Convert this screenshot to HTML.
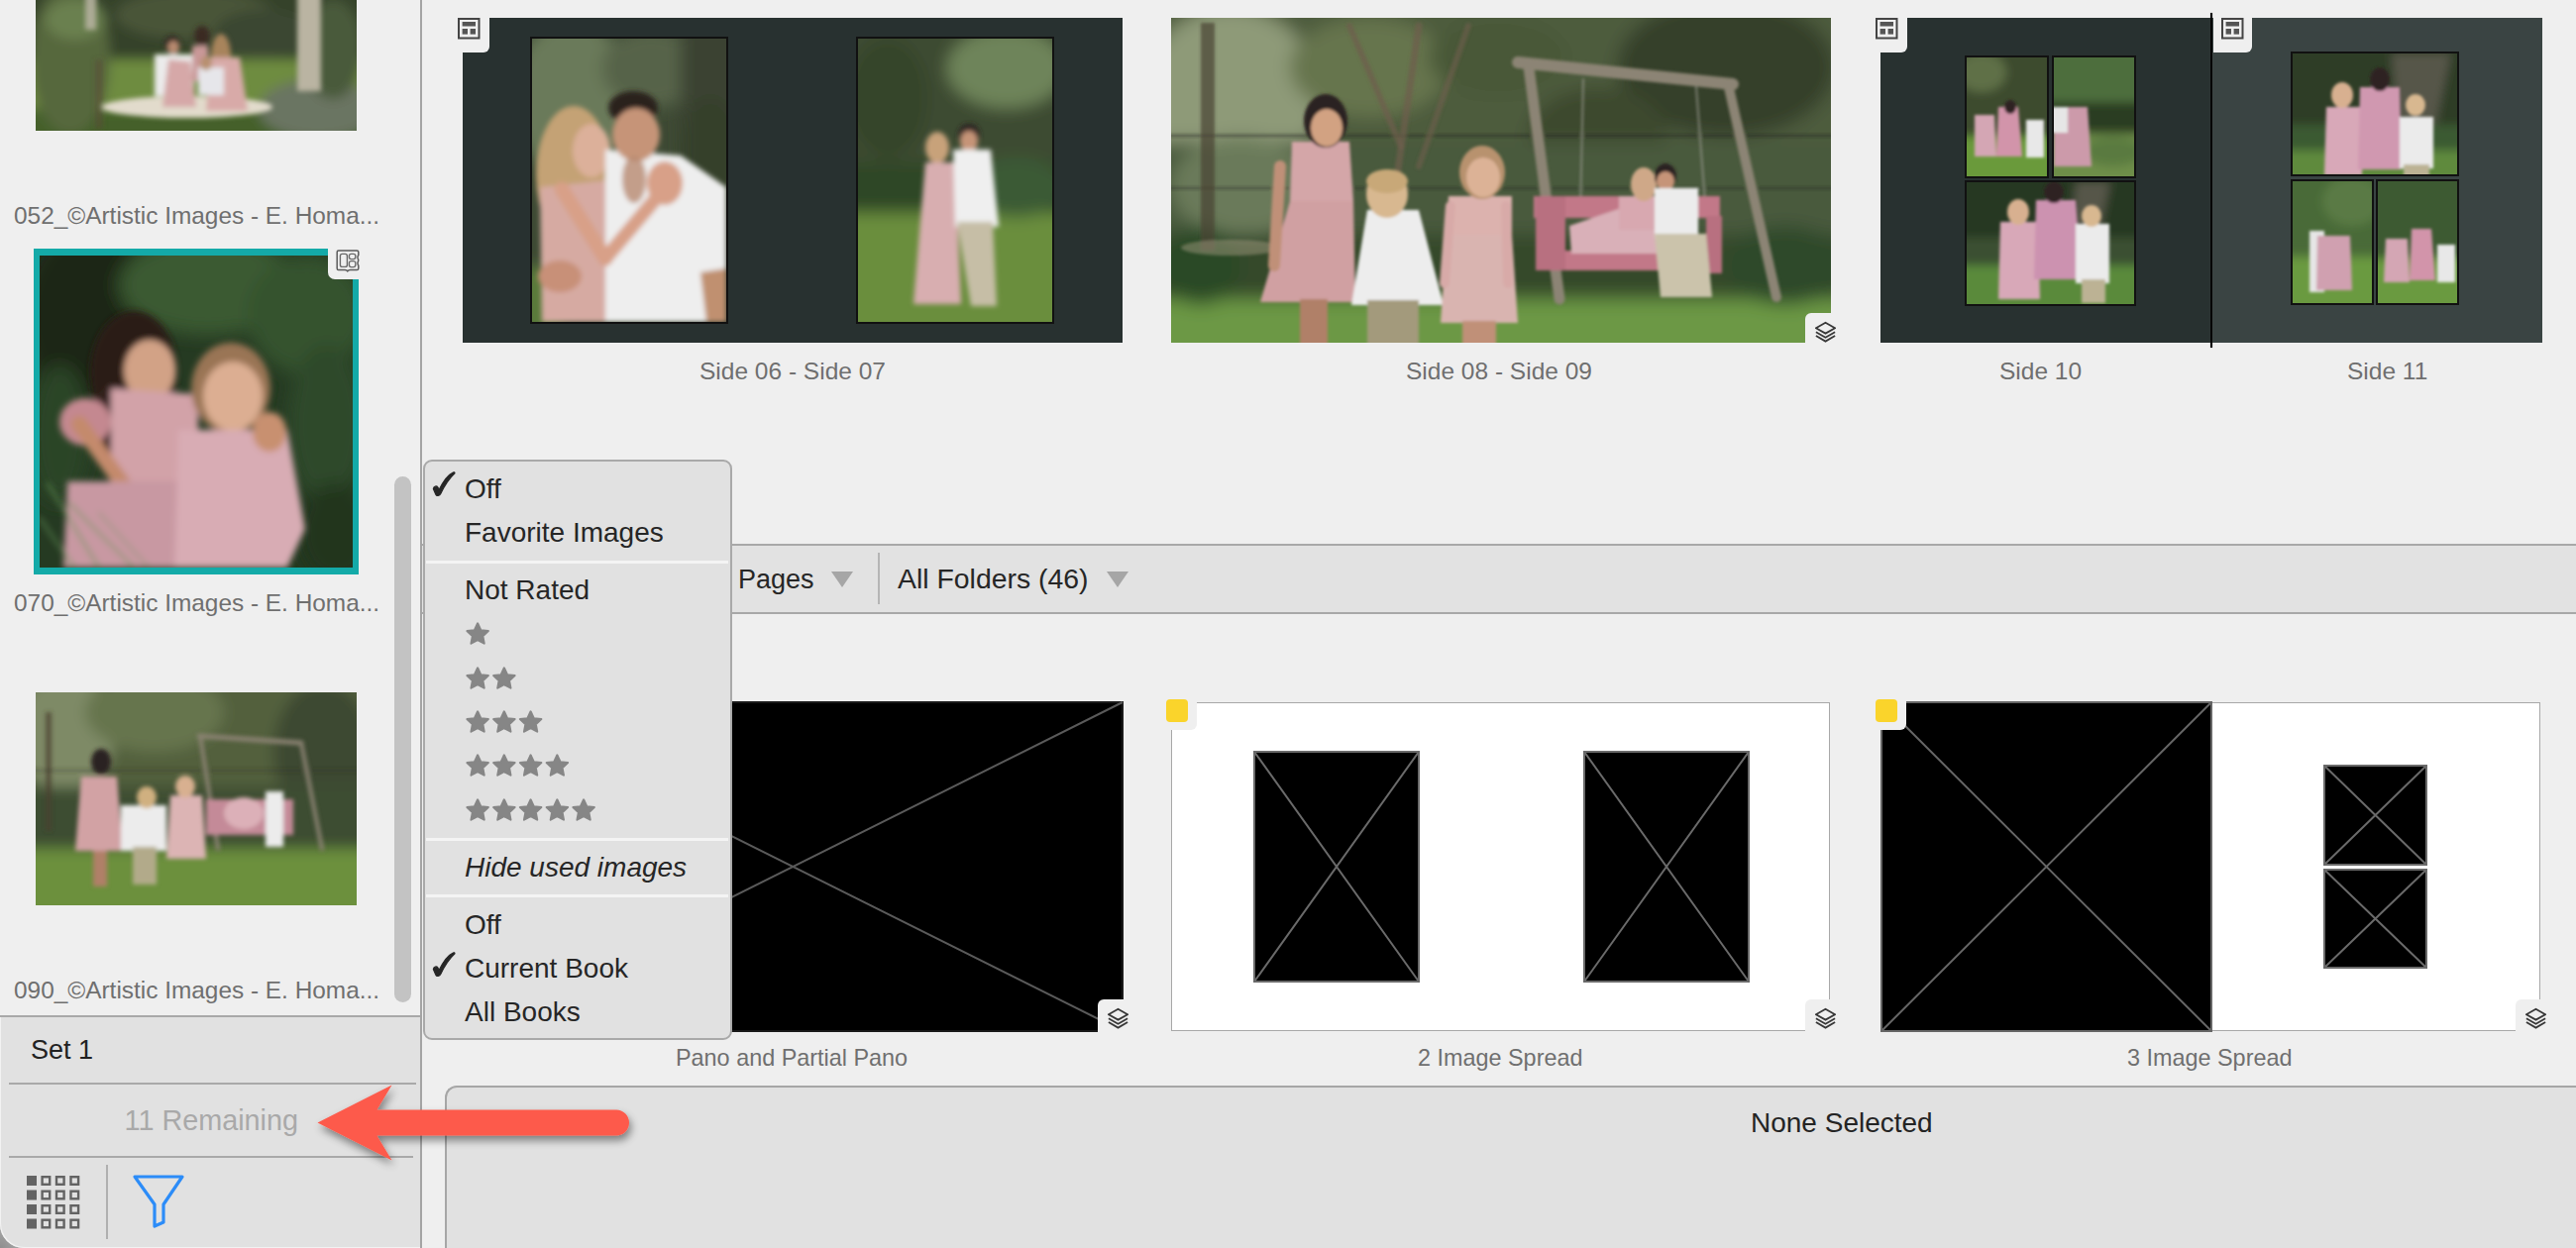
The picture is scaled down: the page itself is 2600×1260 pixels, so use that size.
<!DOCTYPE html>
<html><head><meta charset="utf-8">
<style>
html,body{margin:0;padding:0;}
body{width:2600px;height:1260px;overflow:hidden;background:#efefef;position:relative;font-family:"Liberation Sans",sans-serif;}
.a{position:absolute;}
.t{position:absolute;white-space:nowrap;line-height:1;}
.lbl{position:absolute;white-space:nowrap;color:#6f6f6f;font-size:24px;line-height:1;}
.mi{position:absolute;left:469px;white-space:nowrap;color:#262626;font-size:28px;line-height:1;}
svg{display:block;position:absolute;}
</style></head><body>
<svg style="left:36px;top:0px" width="324" height="132" viewBox="0 0 324 132"><defs><filter id="b1" x="-50%" y="-50%" width="200%" height="200%"><feGaussianBlur stdDeviation="6"/></filter><filter id="b2" x="-50%" y="-50%" width="200%" height="200%"><feGaussianBlur stdDeviation="2.5"/></filter></defs><rect x="0" y="0" width="324" height="132" fill="#3d4a30"/><g filter="url(#b1)"><rect x="-20" y="-20" width="364" height="82" fill="#36422c" opacity="1"/><ellipse cx="160" cy="15" rx="80" ry="25" fill="#485438" opacity="1"/><ellipse cx="230" cy="35" rx="50" ry="25" fill="#3a4630" opacity="1"/><rect x="-20" y="60" width="364" height="52" fill="#6e8c40" opacity="1"/><rect x="-20" y="110" width="364" height="42" fill="#44602c" opacity="1"/><ellipse cx="35" cy="60" rx="40" ry="75" fill="#56683e" opacity="1"/><ellipse cx="40" cy="20" rx="30" ry="20" fill="#6a8050" opacity="1"/><ellipse cx="285" cy="110" rx="60" ry="30" fill="#6a7462" opacity="1"/><ellipse cx="300" cy="50" rx="30" ry="50" fill="#4a5a3a" opacity="1"/></g><g filter="url(#b2)"><rect x="264" y="-9.5" width="24" height="101.5" fill="#bab4a2" opacity="1"/><rect x="50" y="-9.5" width="11" height="39.5" fill="#b8b4a2" opacity="0.85"/><rect x="60" y="60" width="8" height="70" fill="#5a4a38" opacity="0.5"/><ellipse cx="153" cy="108" rx="86" ry="11" fill="#e2dbcc" opacity="1"/><rect x="120" y="55" width="40" height="42" fill="#ebebeb" opacity="1"/><ellipse cx="138" cy="45" rx="8" ry="9" fill="#2e2420" opacity="1"/><ellipse cx="139" cy="48" rx="6" ry="7" fill="#b88a70" opacity="1"/><polygon points="134,60 156,62 162,108 128,108" fill="#d6a8a8" opacity="1"/><ellipse cx="168" cy="36" rx="8" ry="10" fill="#3a2a22" opacity="1"/><rect x="158" y="46" width="16" height="36" fill="#c99898" opacity="1"/><ellipse cx="187" cy="56" rx="10" ry="22" fill="#a8845c" opacity="1"/><polygon points="176,58 206,58 214,112 172,112" fill="#d8aaa8" opacity="1"/><rect x="164" y="68" width="26" height="28" fill="#e6e6ea" opacity="1"/><ellipse cx="172" cy="64" rx="6" ry="7" fill="#b89070" opacity="1"/></g></svg>
<svg style="left:40px;top:258px" width="316" height="315" viewBox="0 0 316 315"><defs><filter id="b3" x="-50%" y="-50%" width="200%" height="200%"><feGaussianBlur stdDeviation="9"/></filter><filter id="b4" x="-50%" y="-50%" width="200%" height="200%"><feGaussianBlur stdDeviation="3"/></filter></defs><rect x="0" y="0" width="316" height="315" fill="#253a22"/><g filter="url(#b3)"><ellipse cx="50" cy="60" rx="70" ry="90" fill="#1a2816" opacity="1"/><ellipse cx="170" cy="30" rx="90" ry="50" fill="#3a5a32" opacity="1"/><ellipse cx="270" cy="60" rx="60" ry="60" fill="#34522e" opacity="1"/><ellipse cx="290" cy="170" rx="40" ry="80" fill="#2e4a2a" opacity="1"/><ellipse cx="300" cy="280" rx="40" ry="50" fill="#22361e" opacity="1"/><ellipse cx="20" cy="180" rx="30" ry="70" fill="#2c4428" opacity="1"/></g><g filter="url(#b4)"><ellipse cx="95" cy="118" rx="44" ry="62" fill="#2a1c16" opacity="1"/><ellipse cx="75" cy="170" rx="24" ry="40" fill="#33231a" opacity="1"/><ellipse cx="111" cy="116" rx="26" ry="31" fill="#d2a286" opacity="1"/><ellipse cx="46" cy="168" rx="26" ry="24" fill="#c48890" opacity="1"/><polygon points="72,134 160,140 160,232 72,232" fill="#d2a2a8" opacity="1"/><line x1="40" y1="170" x2="92" y2="242" stroke="#c48a6c" stroke-width="16" opacity="1" stroke-linecap="round"/><line x1="92" y1="242" x2="170" y2="236" stroke="#c48a6c" stroke-width="12" opacity="1" stroke-linecap="round"/><polygon points="28,228 230,228 236,315 24,315" fill="#c898a2" opacity="1"/><ellipse cx="193" cy="134" rx="40" ry="46" fill="#9a7454" opacity="1"/><ellipse cx="195" cy="142" rx="30" ry="35" fill="#dcae92" opacity="1"/><polygon points="140,176 250,176 268,276 250,315 136,315" fill="#d8acb4" opacity="1"/><ellipse cx="232" cy="178" rx="17" ry="20" fill="#c89070" opacity="1"/><line x1="8" y1="230" x2="60" y2="315" stroke="#6a9a5a" stroke-width="2.5" opacity="0.75" stroke-linecap="round"/><line x1="30" y1="250" x2="95" y2="315" stroke="#6a9a5a" stroke-width="2.5" opacity="0.65" stroke-linecap="round"/><line x1="0" y1="265" x2="35" y2="315" stroke="#6a9a5a" stroke-width="2.5" opacity="0.65" stroke-linecap="round"/><line x1="60" y1="260" x2="110" y2="315" stroke="#6a9a5a" stroke-width="2" opacity="0.5" stroke-linecap="round"/></g></svg>
<svg style="left:36px;top:699px" width="324" height="215" viewBox="0 0 324 215"><defs><filter id="b5" x="-50%" y="-50%" width="200%" height="200%"><feGaussianBlur stdDeviation="7"/></filter><filter id="b6" x="-50%" y="-50%" width="200%" height="200%"><feGaussianBlur stdDeviation="2"/></filter></defs><rect x="0" y="0" width="324" height="215" fill="#566640"/><g filter="url(#b5)"><rect x="-23" y="-23" width="370" height="123" fill="#52603e" opacity="1"/><ellipse cx="30" cy="40" rx="50" ry="60" fill="#7e8a66" opacity="1"/><ellipse cx="120" cy="20" rx="70" ry="40" fill="#66744e" opacity="1"/><ellipse cx="290" cy="60" rx="50" ry="70" fill="#3c4a30" opacity="1"/><rect x="-23" y="95" width="370" height="65" fill="#3e4e32" opacity="1"/><rect x="-23" y="158" width="370" height="80" fill="#6c903e" opacity="1"/></g><g filter="url(#b6)"><rect x="10" y="20" width="6" height="120" fill="#4a4030" opacity="0.7"/><rect x="-8" y="78" width="340" height="2" fill="#2a2a24" opacity="0.5"/><line x1="165" y1="44" x2="268" y2="51" stroke="#8a8272" stroke-width="5" opacity="1" stroke-linecap="round"/><line x1="166" y1="44" x2="184" y2="158" stroke="#8a8272" stroke-width="4" opacity="1" stroke-linecap="round"/><line x1="268" y1="51" x2="289" y2="158" stroke="#8a8272" stroke-width="4" opacity="1" stroke-linecap="round"/><rect x="172" y="108" width="88" height="36" fill="#c48a98" opacity="1"/><ellipse cx="210" cy="122" rx="20" ry="16" fill="#dcb0b8" opacity="1"/><rect x="232" y="100" width="18" height="56" fill="#ececec" opacity="1"/><polygon points="46,85 82,85 88,160 40,160" fill="#d2a2a4" opacity="1"/><ellipse cx="66" cy="70" rx="10" ry="13" fill="#2c2220" opacity="1"/><rect x="58" y="160" width="14" height="36" fill="#b08068" opacity="1"/><rect x="86" y="114" width="46" height="46" fill="#ececec" opacity="1"/><rect x="98" y="156" width="24" height="38" fill="#b2aa8a" opacity="1"/><ellipse cx="112" cy="106" rx="10" ry="11" fill="#d0b080" opacity="1"/><polygon points="136,104 168,104 172,168 132,168" fill="#dcb4b4" opacity="1"/><ellipse cx="151" cy="95" rx="10" ry="11" fill="#d8b090" opacity="1"/></g></svg>

<div class="a" style="left:34px;top:251px;width:328px;height:7px;background:#14aaa8"></div>
<div class="a" style="left:34px;top:573px;width:328px;height:7px;background:#14aaa8"></div>
<div class="a" style="left:34px;top:251px;width:6px;height:329px;background:#14aaa8"></div>
<div class="a" style="left:356px;top:251px;width:6px;height:329px;background:#14aaa8"></div>
<!-- small icon tab on selected thumb -->
<div class="a" style="left:331px;top:245px;width:40px;height:37px;background:#efefef;border-bottom-left-radius:7px"></div>
<svg style="left:338px;top:250.8px" width="27" height="25" viewBox="0 0 27 25">
 <path d="M3.6 2 L22.2 2 Q23.8 2 23.8 3.6 L23.8 6.5 Q22.6 8 23.2 10 Q24.2 11.8 23.2 13.6 Q22.6 15.4 23.8 17.2 L23.8 20 Q23.8 21.6 22.2 21.6 L15.5 21.6 Q13.6 21.8 12.8 22.8 Q12 21.8 10.1 21.6 L3.6 21.6 Q2.2 21.6 2.2 20 L2.2 3.6 Q2.2 2 3.6 2 Z" fill="none" stroke="#5a5a5a" stroke-width="1.5"/>
 <rect x="5.4" y="5.4" width="7" height="13" rx="2" fill="none" stroke="#6a6a6a" stroke-width="1.4"/>
 <rect x="14.4" y="5.4" width="6.4" height="5.2" rx="2" fill="none" stroke="#6a6a6a" stroke-width="1.4"/>
 <rect x="14.4" y="12.6" width="6.4" height="6" rx="2" fill="none" stroke="#6a6a6a" stroke-width="1.4"/>
</svg>
<div class="lbl" style="left:14px;top:205.5px;font-size:24.4px">052_©Artistic Images - E. Homa...</div>
<div class="lbl" style="left:14px;top:596.5px;font-size:24.4px">070_©Artistic Images - E. Homa...</div>
<div class="lbl" style="left:14px;top:987.5px;font-size:24.4px">090_©Artistic Images - E. Homa...</div>

<div class="a" style="left:398px;top:481px;width:17px;height:531px;border-radius:9px;background:#c3c3c3"></div>
<div class="a" style="left:424px;top:0;width:2px;height:1260px;background:#a4a4a4"></div>
<div class="a" style="left:0;top:1200px;width:40px;height:60px;background:radial-gradient(circle at 0 100%,#8e8e8e 0,#b2b2b2 30px,#c8c8c8 60px)"></div>
<div class="a" style="left:0;top:1025px;width:424px;height:233px;background:#e1e1e1;border-top:2px solid #a8a8a8;border-bottom-left-radius:24px;box-shadow:inset 1px -1px 0 #f2f2f2"></div>
<div class="t" style="left:31px;top:1047px;font-size:27px;color:#222">Set 1</div>
<div class="a" style="left:9px;top:1093px;width:411px;height:2px;background:#a9a9a9"></div>
<div class="t" style="left:125.5px;top:1116.5px;font-size:28.8px;color:#a9a9a9">11 Remaining</div>
<div class="a" style="left:9px;top:1167px;width:408px;height:2px;background:#a9a9a9"></div>
<div class="a" style="left:107px;top:1176px;width:2px;height:75px;background:#b0b0b0"></div>
<svg style="left:26px;top:1186px" width="56" height="56" viewBox="0 0 56 56">
  <g fill="#636363">
    <rect x="1" y="1" width="10" height="10"/><rect x="1" y="15.5" width="10" height="10"/><rect x="1" y="30" width="10" height="10"/><rect x="1" y="44.5" width="10" height="10"/>
  </g>
  <g fill="none" stroke="#636363" stroke-width="2.4">
    <rect x="16.6" y="2.2" width="7.6" height="7.6"/><rect x="31" y="2.2" width="7.6" height="7.6"/><rect x="45.5" y="2.2" width="7.6" height="7.6"/>
    <rect x="16.6" y="16.7" width="7.6" height="7.6"/><rect x="31" y="16.7" width="7.6" height="7.6"/><rect x="45.5" y="16.7" width="7.6" height="7.6"/>
    <rect x="16.6" y="31.2" width="7.6" height="7.6"/><rect x="31" y="31.2" width="7.6" height="7.6"/><rect x="45.5" y="31.2" width="7.6" height="7.6"/>
    <rect x="16.6" y="45.7" width="7.6" height="7.6"/><rect x="31" y="45.7" width="7.6" height="7.6"/><rect x="45.5" y="45.7" width="7.6" height="7.6"/>
  </g>
</svg>
<svg style="left:132px;top:1184px" width="56" height="58" viewBox="0 0 56 58">
  <path d="M4 4 L52 4 L33 32 L33 50 L24 54 L24 32 Z" fill="none" stroke="#2c8cf8" stroke-width="3.2" stroke-linejoin="round"/>
</svg>

<div class="a" style="left:467px;top:18px;width:666px;height:328px;background:#283130"></div>
<div class="a" style="left:1898px;top:18px;width:334px;height:328px;background:#283130"></div>
<div class="a" style="left:2233px;top:18px;width:333px;height:328px;background:#3a4443"></div>
<div class="a" style="left:535px;top:37px;width:200px;height:290px;background:#111"></div><svg style="left:537px;top:39px" width="196" height="286" viewBox="0 0 196 286"><defs><filter id="b7" x="-50%" y="-50%" width="200%" height="200%"><feGaussianBlur stdDeviation="8"/></filter><filter id="b8" x="-50%" y="-50%" width="200%" height="200%"><feGaussianBlur stdDeviation="2.5"/></filter></defs><rect x="0" y="0" width="196" height="286" fill="#3e4a34"/><g filter="url(#b7)"><ellipse cx="40" cy="60" rx="60" ry="80" fill="#6a7a5a" opacity="1"/><ellipse cx="120" cy="30" rx="50" ry="40" fill="#56644a" opacity="1"/><rect x="150" y="-26" width="72" height="338" fill="#3a4230" opacity="1"/><rect x="-26" y="230" width="56" height="82" fill="#5a7a3a" opacity="1"/><ellipse cx="180" cy="120" rx="30" ry="60" fill="#34402c" opacity="1"/></g><g filter="url(#b8)"><ellipse cx="42" cy="138" rx="38" ry="70" fill="#c4a274" opacity="1"/><polygon points="8,150 86,142 92,286 10,286" fill="#d6aaa2" opacity="1"/><ellipse cx="60" cy="113" rx="19" ry="27" fill="#dcb09a" opacity="1"/><polygon points="74,112 150,118 196,150 196,286 74,286" fill="#eeeeee" opacity="1"/><ellipse cx="102" cy="70" rx="25" ry="17" fill="#2a201c" opacity="1"/><ellipse cx="105" cy="97" rx="24" ry="27" fill="#c69478" opacity="1"/><ellipse cx="103" cy="142" rx="12" ry="24" fill="#b88a70" opacity="0.8"/><line x1="30" y1="152" x2="74" y2="222" stroke="#d8a088" stroke-width="15" opacity="1" stroke-linecap="round"/><line x1="74" y1="222" x2="138" y2="146" stroke="#d8a088" stroke-width="14" opacity="1" stroke-linecap="round"/><ellipse cx="134" cy="146" rx="18" ry="22" fill="#d8a088" opacity="1"/><ellipse cx="28" cy="240" rx="22" ry="16" fill="#c89078" opacity="1"/><polygon points="170,236 196,232 196,286 176,286" fill="#c09070" opacity="1"/></g></svg>
<div class="a" style="left:864px;top:37px;width:200px;height:290px;background:#111"></div><svg style="left:866px;top:39px" width="196" height="286" viewBox="0 0 196 286"><defs><filter id="b9" x="-50%" y="-50%" width="200%" height="200%"><feGaussianBlur stdDeviation="8"/></filter><filter id="b10" x="-50%" y="-50%" width="200%" height="200%"><feGaussianBlur stdDeviation="2.5"/></filter></defs><rect x="0" y="0" width="196" height="286" fill="#3a4a30"/><g filter="url(#b9)"><rect x="-26" y="-26" width="248" height="156" fill="#3e4c32" opacity="1"/><ellipse cx="150" cy="30" rx="60" ry="40" fill="#6e845a" opacity="1"/><ellipse cx="30" cy="60" rx="40" ry="60" fill="#34442c" opacity="1"/><rect x="-26" y="125" width="248" height="55" fill="#2e4628" opacity="1"/><rect x="-26" y="176" width="248" height="136" fill="#6a8e3e" opacity="1"/><ellipse cx="160" cy="150" rx="50" ry="30" fill="#3a5a34" opacity="1"/></g><g filter="url(#b10)"><ellipse cx="80" cy="110" rx="12" ry="16" fill="#c8a27a" opacity="1"/><polygon points="68,125 98,125 104,268 56,268" fill="#d8aeb0" opacity="1"/><ellipse cx="112" cy="97" rx="11" ry="11" fill="#2a2220" opacity="1"/><ellipse cx="112" cy="104" rx="9" ry="11" fill="#c69478" opacity="1"/><polygon points="96,112 134,112 142,190 98,190" fill="#efefef" opacity="1"/><polygon points="100,185 136,185 140,270 114,270" fill="#c6bea6" opacity="1"/></g></svg>
<svg style="left:1182px;top:18px" width="666" height="328" viewBox="0 0 666 328"><defs><filter id="b11" x="-50%" y="-50%" width="200%" height="200%"><feGaussianBlur stdDeviation="9"/></filter><filter id="b12" x="-50%" y="-50%" width="200%" height="200%"><feGaussianBlur stdDeviation="1.5"/></filter></defs><rect x="0" y="0" width="666" height="328" fill="#4a5838"/><g filter="url(#b11)"><rect x="-29" y="-29" width="724" height="154" fill="#4e5c3c" opacity="1"/><ellipse cx="60" cy="80" rx="90" ry="90" fill="#8e9a78" opacity="1"/><ellipse cx="200" cy="50" rx="80" ry="50" fill="#66744e" opacity="1"/><ellipse cx="330" cy="40" rx="70" ry="40" fill="#4a5838" opacity="1"/><ellipse cx="560" cy="50" rx="110" ry="70" fill="#34402a" opacity="1"/><ellipse cx="430" cy="120" rx="70" ry="50" fill="#3c4a2e" opacity="1"/><rect x="-29" y="125" width="724" height="95" fill="#4a5a3e" opacity="1"/><ellipse cx="70" cy="170" rx="70" ry="50" fill="#6a7a5a" opacity="1"/><rect x="-29" y="218" width="724" height="68" fill="#34482c" opacity="1"/><rect x="-29" y="284" width="724" height="73" fill="#6c9844" opacity="1"/><ellipse cx="30" cy="250" rx="40" ry="40" fill="#2c4a28" opacity="1"/><ellipse cx="620" cy="250" rx="60" ry="40" fill="#2e4a2a" opacity="1"/></g><g filter="url(#b12)"><rect x="-6.5" y="118" width="679.0" height="2" fill="#262a20" opacity="0.6"/><rect x="-6.5" y="171" width="679.0" height="2" fill="#262a20" opacity="0.5"/><rect x="30" y="5" width="14" height="230" fill="#4a4234" opacity="0.7"/><line x1="180" y1="8" x2="232" y2="130" stroke="#6e5e4c" stroke-width="6" opacity="0.7" stroke-linecap="round"/><line x1="250" y1="8" x2="228" y2="160" stroke="#6e5e4c" stroke-width="7" opacity="0.7" stroke-linecap="round"/><line x1="300" y1="8" x2="250" y2="150" stroke="#6e5e4c" stroke-width="6" opacity="0.6" stroke-linecap="round"/><ellipse cx="60" cy="232" rx="50" ry="8" fill="#aaa288" opacity="0.45"/><line x1="350" y1="45" x2="567" y2="67" stroke="#8c8474" stroke-width="12" opacity="1" stroke-linecap="round"/><line x1="361" y1="50" x2="392" y2="284" stroke="#8c8474" stroke-width="11" opacity="1" stroke-linecap="round"/><line x1="562" y1="66" x2="611" y2="282" stroke="#8c8474" stroke-width="10" opacity="1" stroke-linecap="round"/><line x1="416" y1="62" x2="413" y2="200" stroke="#9a9a90" stroke-width="2" opacity="0.7" stroke-linecap="round"/><line x1="530" y1="70" x2="540" y2="200" stroke="#9a9a90" stroke-width="2" opacity="0.7" stroke-linecap="round"/><rect x="366" y="180" width="188" height="22" fill="#c27888" opacity="1"/><rect x="396" y="235" width="158" height="20" fill="#c27888" opacity="1"/><rect x="368" y="180" width="30" height="75" fill="#b87080" opacity="1"/><rect x="540" y="200" width="16" height="58" fill="#b87080" opacity="1"/><polygon points="402,210 460,190 490,200 490,238 404,238" fill="#d9b0b8" opacity="1"/><rect x="452" y="180" width="38" height="34" fill="#d8a8b0" opacity="1"/><ellipse cx="477" cy="168" rx="13" ry="17" fill="#cfa888" opacity="1"/><ellipse cx="499" cy="160" rx="11" ry="13" fill="#2a2220" opacity="1"/><ellipse cx="499" cy="165" rx="9" ry="10" fill="#c69478" opacity="1"/><rect x="488" y="172" width="44" height="50" fill="#ececec" opacity="1"/><polygon points="488,218 540,218 546,282 494,282" fill="#cbc3ab" opacity="1"/><polygon points="122,125 180,125 184,185 120,185" fill="#d4a6a8" opacity="1"/><polygon points="120,185 184,185 186,287 90,287" fill="#d0a0a2" opacity="1"/><line x1="110" y1="150" x2="104" y2="250" stroke="#c09078" stroke-width="12" opacity="1" stroke-linecap="round"/><ellipse cx="156" cy="104" rx="22" ry="27" fill="#2c2220" opacity="1"/><ellipse cx="157" cy="111" rx="16" ry="19" fill="#d2a282" opacity="1"/><rect x="130" y="284" width="28" height="50.5" fill="#b08068" opacity="1"/><polygon points="198,194 250,194 275,290 182,290" fill="#ededed" opacity="1"/><ellipse cx="218" cy="178" rx="21" ry="24" fill="#d8b890" opacity="1"/><ellipse cx="218" cy="165" rx="21" ry="12" fill="#c8a878" opacity="1"/><rect x="198" y="285" width="52" height="49.5" fill="#a39a7c" opacity="1"/><polygon points="280,180 344,180 344,221 278,221" fill="#dcb2ae" opacity="1"/><polygon points="278,219 344,219 350,308 272,308" fill="#d9b4b0" opacity="1"/><line x1="282" y1="190" x2="276" y2="268" stroke="#d8aaa8" stroke-width="10" opacity="1" stroke-linecap="round"/><line x1="338" y1="190" x2="340" y2="268" stroke="#d8aaa8" stroke-width="10" opacity="1" stroke-linecap="round"/><ellipse cx="314" cy="156" rx="23" ry="27" fill="#b8926e" opacity="1"/><ellipse cx="315" cy="161" rx="17" ry="20" fill="#dcb296" opacity="1"/><rect x="294" y="306" width="34" height="28.5" fill="#c09078" opacity="1"/></g></svg>
<div class="a" style="left:1983px;top:56px;width:85px;height:124px;background:#111"></div><svg style="left:1985px;top:58px" width="81" height="120" viewBox="0 0 81 120"><defs><filter id="b13" x="-50%" y="-50%" width="200%" height="200%"><feGaussianBlur stdDeviation="5"/></filter><filter id="b14" x="-50%" y="-50%" width="200%" height="200%"><feGaussianBlur stdDeviation="1.5"/></filter></defs><rect x="0" y="0" width="81" height="120" fill="#3a4a2c"/><g filter="url(#b13)"><rect x="-17" y="-17" width="115" height="97" fill="#3c4c2e" opacity="1"/><ellipse cx="15" cy="15" rx="25" ry="20" fill="#5e7046" opacity="1"/><rect x="-17" y="80" width="115" height="57" fill="#6a9a3a" opacity="1"/></g><g filter="url(#b14)"><polygon points="8,58 28,58 30,100 8,100" fill="#d4a6b4" opacity="1"/><polygon points="32,50 52,50 56,100 30,100" fill="#d294aa" opacity="1"/><rect x="60" y="63" width="18" height="38" fill="#e8e8e8" opacity="1"/><ellipse cx="44" cy="50" rx="6" ry="7" fill="#2e2420" opacity="1"/></g></svg>
<div class="a" style="left:2071px;top:56px;width:85px;height:124px;background:#111"></div><svg style="left:2073px;top:58px" width="81" height="120" viewBox="0 0 81 120"><defs><filter id="b15" x="-50%" y="-50%" width="200%" height="200%"><feGaussianBlur stdDeviation="5"/></filter><filter id="b16" x="-50%" y="-50%" width="200%" height="200%"><feGaussianBlur stdDeviation="1.5"/></filter></defs><rect x="0" y="0" width="81" height="120" fill="#3a5030"/><g filter="url(#b15)"><rect x="-17" y="-17" width="115" height="67" fill="#4e6e3c" opacity="1"/><rect x="-17" y="45" width="115" height="32" fill="#2c3c24" opacity="1"/><rect x="-17" y="77" width="115" height="60" fill="#6e8e4a" opacity="1"/><ellipse cx="60" cy="95" rx="30" ry="15" fill="#5a7a40" opacity="1"/></g><g filter="url(#b16)"><polygon points="0,50 34,50 38,110 0,110" fill="#cc9aaa" opacity="1"/><rect x="-6.5" y="50" width="20.5" height="26" fill="#e6e6e6" opacity="1"/></g></svg>
<div class="a" style="left:1983px;top:182px;width:173px;height:127px;background:#111"></div><svg style="left:1985px;top:184px" width="169" height="123" viewBox="0 0 169 123"><defs><filter id="b17" x="-50%" y="-50%" width="200%" height="200%"><feGaussianBlur stdDeviation="5"/></filter><filter id="b18" x="-50%" y="-50%" width="200%" height="200%"><feGaussianBlur stdDeviation="1.5"/></filter></defs><rect x="0" y="0" width="169" height="123" fill="#2a3a28"/><g filter="url(#b17)"><rect x="-17" y="-17" width="203" height="77" fill="#283824" opacity="1"/><rect x="-17" y="56" width="203" height="28" fill="#3a5030" opacity="1"/><rect x="-17" y="84" width="203" height="56" fill="#5a8a3a" opacity="1"/><polygon points="110,0 145,0 130,70 105,70" fill="#56564a" opacity="1"/></g><g filter="url(#b18)"><polygon points="34,40 72,40 74,118 32,118" fill="#d8a8b8" opacity="1"/><ellipse cx="52" cy="30" rx="11" ry="13" fill="#d8b090" opacity="1"/><polygon points="70,18 110,18 116,98 68,98" fill="#cc92b0" opacity="1"/><ellipse cx="88" cy="10" rx="10" ry="11" fill="#2e2420" opacity="1"/><rect x="110" y="42" width="34" height="60" fill="#ebebeb" opacity="1"/><rect x="116" y="98" width="24" height="24" fill="#bcb294" opacity="1"/><ellipse cx="126" cy="34" rx="10" ry="11" fill="#d8b890" opacity="1"/></g></svg>
<div class="a" style="left:2312px;top:52px;width:170px;height:126px;background:#111"></div><svg style="left:2314px;top:54px" width="166" height="122" viewBox="0 0 166 122"><defs><filter id="b19" x="-50%" y="-50%" width="200%" height="200%"><feGaussianBlur stdDeviation="5"/></filter><filter id="b20" x="-50%" y="-50%" width="200%" height="200%"><feGaussianBlur stdDeviation="1.5"/></filter></defs><rect x="0" y="0" width="166" height="122" fill="#2e3a28"/><g filter="url(#b19)"><rect x="-17" y="-17" width="200" height="91" fill="#2e3c28" opacity="1"/><polygon points="100,0 160,0 140,90 108,90" fill="#56564a" opacity="1"/><rect x="-17" y="72" width="200" height="28" fill="#3a5a30" opacity="1"/><rect x="-17" y="98" width="200" height="41" fill="#5e8a3e" opacity="1"/></g><g filter="url(#b20)"><polygon points="34,54 70,54 70,123 32,123" fill="#d8a8b8" opacity="1"/><ellipse cx="50" cy="42" rx="11" ry="13" fill="#d8b090" opacity="1"/><polygon points="68,34 108,34 110,117 66,117" fill="#d098b0" opacity="1"/><ellipse cx="88" cy="26" rx="10" ry="12" fill="#2e2420" opacity="1"/><rect x="108" y="64" width="34" height="52" fill="#ebebeb" opacity="1"/><rect x="112" y="112" width="26" height="16.5" fill="#bcb294" opacity="1"/><ellipse cx="124" cy="52" rx="10" ry="11" fill="#d8b890" opacity="1"/></g></svg>
<div class="a" style="left:2312px;top:181px;width:84px;height:127px;background:#111"></div><svg style="left:2314px;top:183px" width="80" height="123" viewBox="0 0 80 123"><defs><filter id="b21" x="-50%" y="-50%" width="200%" height="200%"><feGaussianBlur stdDeviation="5"/></filter><filter id="b22" x="-50%" y="-50%" width="200%" height="200%"><feGaussianBlur stdDeviation="1.5"/></filter></defs><rect x="0" y="0" width="80" height="123" fill="#4a6a38"/><g filter="url(#b21)"><rect x="-17" y="-17" width="114" height="89" fill="#4a6a38" opacity="1"/><ellipse cx="60" cy="20" rx="30" ry="25" fill="#5a7a44" opacity="1"/><rect x="-17" y="76" width="114" height="64" fill="#6a9a40" opacity="1"/></g><g filter="url(#b22)"><rect x="17" y="50" width="15" height="62" fill="#e6e6e6" opacity="1"/><polygon points="25,55 58,55 60,110 24,110" fill="#d0a0b0" opacity="1"/></g></svg>
<div class="a" style="left:2398px;top:181px;width:84px;height:127px;background:#111"></div><svg style="left:2400px;top:183px" width="80" height="123" viewBox="0 0 80 123"><defs><filter id="b23" x="-50%" y="-50%" width="200%" height="200%"><feGaussianBlur stdDeviation="5"/></filter><filter id="b24" x="-50%" y="-50%" width="200%" height="200%"><feGaussianBlur stdDeviation="1.5"/></filter></defs><rect x="0" y="0" width="80" height="123" fill="#3e5a32"/><g filter="url(#b23)"><rect x="-17" y="-17" width="114" height="95" fill="#3e5a32" opacity="1"/><rect x="-17" y="78" width="114" height="62" fill="#6a9a40" opacity="1"/></g><g filter="url(#b24)"><polygon points="8,58 30,58 32,102 6,102" fill="#d4a6b4" opacity="1"/><polygon points="34,48 54,48 58,100 32,100" fill="#d294aa" opacity="1"/><rect x="60" y="64" width="18" height="38" fill="#e8e8e8" opacity="1"/></g></svg>
<div class="a" style="left:2231px;top:13px;width:2px;height:338px;background:#050505;box-shadow:0 0 1px #555"></div>
<div class="a" style="left:459px;top:10px;width:35px;height:43px;background:#efefef;border-bottom-right-radius:6px"></div><svg style="left:462px;top:18px" width="23" height="22" viewBox="0 0 23 22"><rect x="1" y="1" width="20.5" height="19.5" fill="none" stroke="#444" stroke-width="2"/><rect x="4.6" y="4" width="13.4" height="4.5" fill="#555"/><rect x="4.6" y="11" width="5.4" height="5.6" fill="#555"/><rect x="12.6" y="11" width="5.4" height="5.6" fill="#555"/></svg>
<div class="a" style="left:1890px;top:10px;width:35px;height:43px;background:#efefef;border-bottom-right-radius:6px"></div><svg style="left:1893px;top:18px" width="23" height="22" viewBox="0 0 23 22"><rect x="1" y="1" width="20.5" height="19.5" fill="none" stroke="#444" stroke-width="2"/><rect x="4.6" y="4" width="13.4" height="4.5" fill="#555"/><rect x="4.6" y="11" width="5.4" height="5.6" fill="#555"/><rect x="12.6" y="11" width="5.4" height="5.6" fill="#555"/></svg>
<div class="a" style="left:2234px;top:13px;width:39px;height:40px;background:#efefef;border-bottom-right-radius:6px"></div><svg style="left:2242px;top:18px" width="23" height="22" viewBox="0 0 23 22"><rect x="1" y="1" width="20.5" height="19.5" fill="none" stroke="#444" stroke-width="2"/><rect x="4.6" y="4" width="13.4" height="4.5" fill="#555"/><rect x="4.6" y="11" width="5.4" height="5.6" fill="#555"/><rect x="12.6" y="11" width="5.4" height="5.6" fill="#555"/></svg>
<div class="a" style="left:1822px;top:316px;width:36px;height:40px;background:#efefef;border-top-left-radius:6px"></div><svg style="left:1832px;top:323px" width="21" height="24" viewBox="0 0 21 24"><g fill="none" stroke="#383838" stroke-width="1.8" stroke-linejoin="miter"><path d="M0.9 16 L10.5 21.6 L20.1 16"/><path d="M0.9 12.2 L10.5 17.8 L20.1 12.2"/><path d="M10.5 2.8 L20.1 8.2 L10.5 13.6 L0.9 8.2 Z" fill="#efefef"/></g></svg>
<div class="lbl" style="left:706px;top:362.5px;font-size:24.5px">Side 06 - Side 07</div>
<div class="lbl" style="left:1419px;top:362.5px;font-size:24.5px">Side 08 - Side 09</div>
<div class="lbl" style="left:2018px;top:362.5px;font-size:24.5px">Side 10</div>
<div class="lbl" style="left:2369px;top:362.5px;font-size:24.5px">Side 11</div>

<div class="a" style="left:426px;top:549px;width:2174px;height:67px;background:#e2e2e2;border-top:2px solid #a8a8a8;border-bottom:2px solid #a8a8a8"></div>
<div class="t" style="left:745px;top:572px;font-size:27px;color:#262626">Pages</div>
<svg style="left:839px;top:577px" width="23" height="17"><path d="M0 0 L22 0 L11 16 Z" fill="#a6a6a6"/></svg>
<div class="a" style="left:886px;top:558px;width:2px;height:52px;background:#b5b5b5"></div>
<div class="t" style="left:906px;top:570px;font-size:28.4px;color:#262626">All Folders (46)</div>
<svg style="left:1117px;top:577px" width="23" height="17"><path d="M0 0 L22 0 L11 16 Z" fill="#a6a6a6"/></svg>
<div class="a" style="left:1182px;top:709px;width:663px;height:330px;background:#fff;border:1.5px solid #a8a8a8"></div>
<div class="a" style="left:1898px;top:709px;width:664px;height:330px;background:#fff;border:1.5px solid #a8a8a8"></div>
<svg style="left:467px;top:708px" width="667" height="334" viewBox="0 0 667 334"><rect x="0" y="0" width="667" height="334" fill="#000"/><rect x="1" y="1" width="665" height="332" fill="none" stroke="#1a1a1a" stroke-width="2"/><path d="M1 1 L666 333 M666 1 L1 333" stroke="#5a5a5a" stroke-width="2"/></svg>
<svg style="left:1265px;top:758px" width="168" height="234" viewBox="0 0 168 234"><rect x="0" y="0" width="168" height="234" fill="#000"/><rect x="1" y="1" width="166" height="232" fill="none" stroke="#6a6a6a" stroke-width="2"/><path d="M1 1 L167 233 M167 1 L1 233" stroke="#6a6a6a" stroke-width="2"/></svg>
<svg style="left:1598px;top:758px" width="168" height="234" viewBox="0 0 168 234"><rect x="0" y="0" width="168" height="234" fill="#000"/><rect x="1" y="1" width="166" height="232" fill="none" stroke="#6a6a6a" stroke-width="2"/><path d="M1 1 L167 233 M167 1 L1 233" stroke="#6a6a6a" stroke-width="2"/></svg>
<svg style="left:1898px;top:708px" width="335" height="334" viewBox="0 0 335 334"><rect x="0" y="0" width="335" height="334" fill="#000"/><rect x="1" y="1" width="333" height="332" fill="none" stroke="#666" stroke-width="2"/><path d="M1 1 L334 333 M334 1 L1 333" stroke="#666" stroke-width="2"/></svg>
<svg style="left:2345px;top:772px" width="105" height="102" viewBox="0 0 105 102"><rect x="0" y="0" width="105" height="102" fill="#000"/><rect x="1" y="1" width="103" height="100" fill="none" stroke="#6a6a6a" stroke-width="2"/><path d="M1 1 L104 101 M104 1 L1 101" stroke="#6a6a6a" stroke-width="2"/></svg>
<svg style="left:2345px;top:877px" width="105" height="101" viewBox="0 0 105 101"><rect x="0" y="0" width="105" height="101" fill="#000"/><rect x="1" y="1" width="103" height="99" fill="none" stroke="#6a6a6a" stroke-width="2"/><path d="M1 1 L104 100 M104 1 L1 100" stroke="#6a6a6a" stroke-width="2"/></svg>
<div class="a" style="left:1108px;top:1009px;width:36px;height:40px;background:#efefef;border-top-left-radius:6px"></div><svg style="left:1118px;top:1016px" width="21" height="24" viewBox="0 0 21 24"><g fill="none" stroke="#383838" stroke-width="1.8" stroke-linejoin="miter"><path d="M0.9 16 L10.5 21.6 L20.1 16"/><path d="M0.9 12.2 L10.5 17.8 L20.1 12.2"/><path d="M10.5 2.8 L20.1 8.2 L10.5 13.6 L0.9 8.2 Z" fill="#efefef"/></g></svg>
<div class="a" style="left:1822px;top:1009px;width:36px;height:40px;background:#efefef;border-top-left-radius:6px"></div><svg style="left:1832px;top:1016px" width="21" height="24" viewBox="0 0 21 24"><g fill="none" stroke="#383838" stroke-width="1.8" stroke-linejoin="miter"><path d="M0.9 16 L10.5 21.6 L20.1 16"/><path d="M0.9 12.2 L10.5 17.8 L20.1 12.2"/><path d="M10.5 2.8 L20.1 8.2 L10.5 13.6 L0.9 8.2 Z" fill="#efefef"/></g></svg>
<div class="a" style="left:2539px;top:1009px;width:36px;height:40px;background:#efefef;border-top-left-radius:6px"></div><svg style="left:2549px;top:1016px" width="21" height="24" viewBox="0 0 21 24"><g fill="none" stroke="#383838" stroke-width="1.8" stroke-linejoin="miter"><path d="M0.9 16 L10.5 21.6 L20.1 16"/><path d="M0.9 12.2 L10.5 17.8 L20.1 12.2"/><path d="M10.5 2.8 L20.1 8.2 L10.5 13.6 L0.9 8.2 Z" fill="#efefef"/></g></svg>
<div class="a" style="left:1174px;top:701px;width:34px;height:36px;background:#efefef;border-bottom-right-radius:6px"></div><div class="a" style="left:1177px;top:706px;width:22px;height:23px;background:#fad42b;border-radius:4px"></div>
<div class="a" style="left:1890px;top:701px;width:34px;height:36px;background:#efefef;border-bottom-right-radius:6px"></div><div class="a" style="left:1893px;top:706px;width:22px;height:23px;background:#fad42b;border-radius:4px"></div>
<div class="a" style="left:459px;top:701px;width:34px;height:36px;background:#efefef;border-bottom-right-radius:6px"></div><div class="a" style="left:462px;top:706px;width:22px;height:23px;background:#fad42b;border-radius:4px"></div>
<div class="lbl" style="left:682px;top:1057px;font-size:23.4px">Pano and Partial Pano</div>
<div class="lbl" style="left:1431px;top:1057px;font-size:23.4px">2 Image Spread</div>
<div class="lbl" style="left:2147px;top:1057px;font-size:23.4px">3 Image Spread</div>

<div class="a" style="left:449px;top:1096px;width:2151px;height:164px;background:#e1e1e1;border-top:2px solid #a6a6a6;border-left:2px solid #a6a6a6;border-top-left-radius:12px"></div>
<div class="t" style="left:1767px;top:1120px;font-size:28px;color:#242424">None Selected</div>

<div class="a" style="left:427px;top:464px;width:308px;height:582px;background:#e1e1e1;border:2px solid #a9a9a9;border-radius:9px"></div>
<div class="a" style="left:430px;top:566px;width:305px;height:3px;background:#f4f4f4"></div>
<div class="a" style="left:430px;top:846px;width:305px;height:3px;background:#f4f4f4"></div>
<div class="a" style="left:430px;top:903px;width:305px;height:3px;background:#f4f4f4"></div>
<svg style="left:428px;top:470px" width="34" height="34" viewBox="0 0 34 34"><path d="M9.3 23.5 C9.8 21.2 12.6 20 13.8 21.8 L15.2 24.3 C19 16.5 23.5 9.5 29.3 6.9 C30.2 6.5 31.3 6.8 31 7.8 C25.5 13 20.5 20.5 16.8 28.5 C15.8 30.6 12.6 31.2 11.8 29.2 Z" fill="#262626" stroke="#262626" stroke-width="1.1" stroke-linejoin="round"/></svg>
<svg style="left:428px;top:955px" width="34" height="34" viewBox="0 0 34 34"><path d="M9.3 23.5 C9.8 21.2 12.6 20 13.8 21.8 L15.2 24.3 C19 16.5 23.5 9.5 29.3 6.9 C30.2 6.5 31.3 6.8 31 7.8 C25.5 13 20.5 20.5 16.8 28.5 C15.8 30.6 12.6 31.2 11.8 29.2 Z" fill="#262626" stroke="#262626" stroke-width="1.1" stroke-linejoin="round"/></svg>
<div class="mi" style="top:480px;">Off</div>
<div class="mi" style="top:524px;">Favorite Images</div>
<div class="mi" style="top:582px;">Not Rated</div>
<div class="mi" style="top:862px;font-style:italic;">Hide used images</div>
<div class="mi" style="top:920px;">Off</div>
<div class="mi" style="top:964px;">Current Book</div>
<div class="mi" style="top:1008px;">All Books</div>
<svg style="left:470px;top:628.2px" width="33" height="26" viewBox="0 0 33 26"><g fill="#868686" stroke="#868686" stroke-width="2" stroke-linejoin="round"><polygon points="12.10,1.30 15.33,8.15 22.85,9.11 17.33,14.30 18.74,21.74 12.10,18.10 5.46,21.74 6.87,14.30 1.35,9.11 8.87,8.15"/></g></svg>
<svg style="left:470px;top:672.6px" width="60" height="26" viewBox="0 0 60 26"><g fill="#868686" stroke="#868686" stroke-width="2" stroke-linejoin="round"><polygon points="12.10,1.30 15.33,8.15 22.85,9.11 17.33,14.30 18.74,21.74 12.10,18.10 5.46,21.74 6.87,14.30 1.35,9.11 8.87,8.15"/><polygon points="38.85,1.30 42.08,8.15 49.60,9.11 44.08,14.30 45.49,21.74 38.85,18.10 32.21,21.74 33.62,14.30 28.10,9.11 35.62,8.15"/></g></svg>
<svg style="left:470px;top:717.0px" width="87" height="26" viewBox="0 0 87 26"><g fill="#868686" stroke="#868686" stroke-width="2" stroke-linejoin="round"><polygon points="12.10,1.30 15.33,8.15 22.85,9.11 17.33,14.30 18.74,21.74 12.10,18.10 5.46,21.74 6.87,14.30 1.35,9.11 8.87,8.15"/><polygon points="38.85,1.30 42.08,8.15 49.60,9.11 44.08,14.30 45.49,21.74 38.85,18.10 32.21,21.74 33.62,14.30 28.10,9.11 35.62,8.15"/><polygon points="65.60,1.30 68.83,8.15 76.35,9.11 70.83,14.30 72.24,21.74 65.60,18.10 58.96,21.74 60.37,14.30 54.85,9.11 62.37,8.15"/></g></svg>
<svg style="left:470px;top:761.4000000000001px" width="114" height="26" viewBox="0 0 114 26"><g fill="#868686" stroke="#868686" stroke-width="2" stroke-linejoin="round"><polygon points="12.10,1.30 15.33,8.15 22.85,9.11 17.33,14.30 18.74,21.74 12.10,18.10 5.46,21.74 6.87,14.30 1.35,9.11 8.87,8.15"/><polygon points="38.85,1.30 42.08,8.15 49.60,9.11 44.08,14.30 45.49,21.74 38.85,18.10 32.21,21.74 33.62,14.30 28.10,9.11 35.62,8.15"/><polygon points="65.60,1.30 68.83,8.15 76.35,9.11 70.83,14.30 72.24,21.74 65.60,18.10 58.96,21.74 60.37,14.30 54.85,9.11 62.37,8.15"/><polygon points="92.35,1.30 95.58,8.15 103.10,9.11 97.58,14.30 98.99,21.74 92.35,18.10 85.71,21.74 87.12,14.30 81.60,9.11 89.12,8.15"/></g></svg>
<svg style="left:470px;top:805.8000000000001px" width="141" height="26" viewBox="0 0 141 26"><g fill="#868686" stroke="#868686" stroke-width="2" stroke-linejoin="round"><polygon points="12.10,1.30 15.33,8.15 22.85,9.11 17.33,14.30 18.74,21.74 12.10,18.10 5.46,21.74 6.87,14.30 1.35,9.11 8.87,8.15"/><polygon points="38.85,1.30 42.08,8.15 49.60,9.11 44.08,14.30 45.49,21.74 38.85,18.10 32.21,21.74 33.62,14.30 28.10,9.11 35.62,8.15"/><polygon points="65.60,1.30 68.83,8.15 76.35,9.11 70.83,14.30 72.24,21.74 65.60,18.10 58.96,21.74 60.37,14.30 54.85,9.11 62.37,8.15"/><polygon points="92.35,1.30 95.58,8.15 103.10,9.11 97.58,14.30 98.99,21.74 92.35,18.10 85.71,21.74 87.12,14.30 81.60,9.11 89.12,8.15"/><polygon points="119.10,1.30 122.33,8.15 129.85,9.11 124.33,14.30 125.74,21.74 119.10,18.10 112.46,21.74 113.87,14.30 108.35,9.11 115.87,8.15"/></g></svg>

<svg style="left:300px;top:1080px" width="360" height="110" viewBox="0 0 360 110">
 <defs><filter id="sh" x="-20%" y="-30%" width="140%" height="170%"><feGaussianBlur in="SourceAlpha" stdDeviation="4"/><feOffset dx="2" dy="5"/><feComponentTransfer><feFuncA type="linear" slope="0.45"/></feComponentTransfer><feMerge><feMergeNode/><feMergeNode in="SourceGraphic"/></feMerge></filter></defs>
 <g filter="url(#sh)">
 <path d="M20.5 53.5 L95.5 15.5 L80.5 40.5 L322 40.5 A13 13 0 0 1 322 66.5 L80.5 66.5 L95.5 91.5 Z" fill="#fd5a4b"/>
 </g>
</svg>
</body></html>
